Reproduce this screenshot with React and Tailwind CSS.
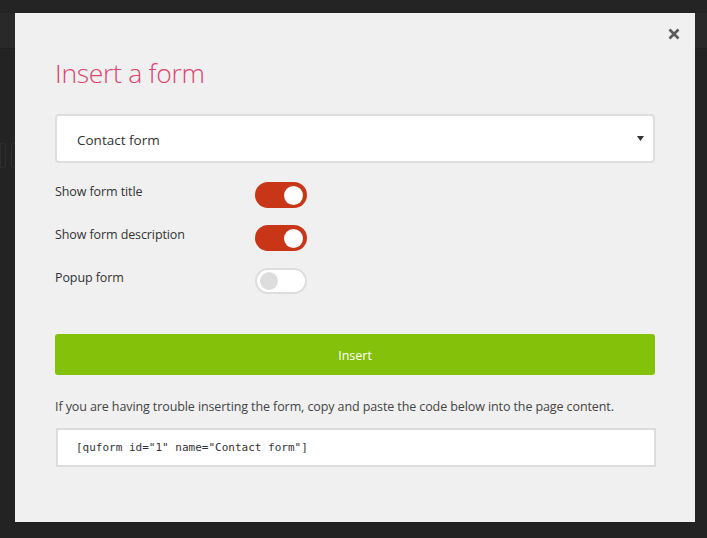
import React from "react";

function Toggle({ on }) {
  if (on) {
    return (
      <div className="flex h-[26px] w-[52px] items-center justify-end rounded-full bg-[#c93517] pr-[4px]">
        <div className="h-[19px] w-[19px] rounded-full bg-white" />
      </div>
    );
  }
  return (
    <div className="flex h-[26px] w-[52px] items-center justify-start rounded-full border-2 border-[#dddddd] bg-white pl-[3px]">
      <div className="h-[18px] w-[18px] rounded-full bg-[#dddddd]" />
    </div>
  );
}

function Row({ label, on }) {
  return (
    <div className="flex h-[26px] items-start">
      <div className="w-[200px] pt-[2px] text-[12.5px] leading-[16px] tracking-[-0.1px] text-[#333]">{label}</div>
      <Toggle on={on} />
    </div>
  );
}

export default function App() {
  return (
    <div
      className="relative h-[538px] w-[707px] overflow-hidden bg-[#232323]"
      style={{ fontFamily: '"Open Sans", "Noto Sans", sans-serif' }}
    >
      {/* background page hints */}
      <div className="h-[13px] bg-[#242424]" />
      <div className="h-[36px] border-b border-[#1e1e1e] bg-[#292929]" />
      <div className="mt-[94px] flex gap-[5px] pl-0">
        <div className="h-[25px] w-[6px] rounded-r-[3px] border border-[#2e2e2e]" />
        <div className="h-[25px] w-[14px] rounded-[3px] border border-[#2e2e2e]" />
      </div>

      {/* modal */}
      <div className="absolute left-[15px] top-[13px] h-[509px] w-[680px] bg-[#f0f0f0]">
        <button className="absolute right-[14px] top-[14px] flex h-[14px] w-[14px] items-center justify-center">
          <svg width="12" height="12" viewBox="0 0 12 12">
            <path d="M1.5 1.5 L10.5 10.5 M10.5 1.5 L1.5 10.5" stroke="#5a5a5a" strokeWidth="2.6" strokeLinecap="butt" />
          </svg>
        </button>

        <div className="px-[40px] pt-[43px]">
          <h1 className="text-[26.5px] font-light leading-[34px] tracking-[-0.3px] text-[#d9456c]">Insert a form</h1>

          <div className="mt-[24px] flex h-[49px] w-[600px] items-center justify-between rounded-[4px] border-2 border-[#dedede] bg-white pl-[20px] pr-[9px]">
            <span className="pt-[3px] text-[13.5px] text-[#333]">Contact form</span>
            <svg width="7" height="5" viewBox="0 0 7 5">
              <path d="M0 0 L7 0 L3.5 5 Z" fill="#333" />
            </svg>
          </div>

          <div className="mt-[19px] flex flex-col gap-[17px]">
            <Row label="Show form title" on />
            <Row label="Show form description" on />
            <Row label="Popup form" on={false} />
          </div>

          <button className="mt-[40px] flex h-[41px] w-[600px] items-center justify-center rounded-[3px] bg-[#83c10b] pt-[3px] text-[12.5px] text-white">
            Insert
          </button>

          <p className="mt-[23px] text-[12.5px] leading-[17px] tracking-[-0.1px] text-[#444]">
            If you are having trouble inserting the form, copy and paste the code below into the page content.
          </p>

          <div className="ml-[1px] mt-[13px] flex h-[39px] w-[600px] items-center border-2 border-[#dcdcdc] bg-white pl-[18px] pt-[1px]">
            <span className="text-[11px] text-[#333]" style={{ fontFamily: '"DejaVu Sans Mono", "Liberation Mono", monospace' }}>
              [quform id="1" name="Contact form"]
            </span>
          </div>
        </div>
      </div>
    </div>
  );
}
